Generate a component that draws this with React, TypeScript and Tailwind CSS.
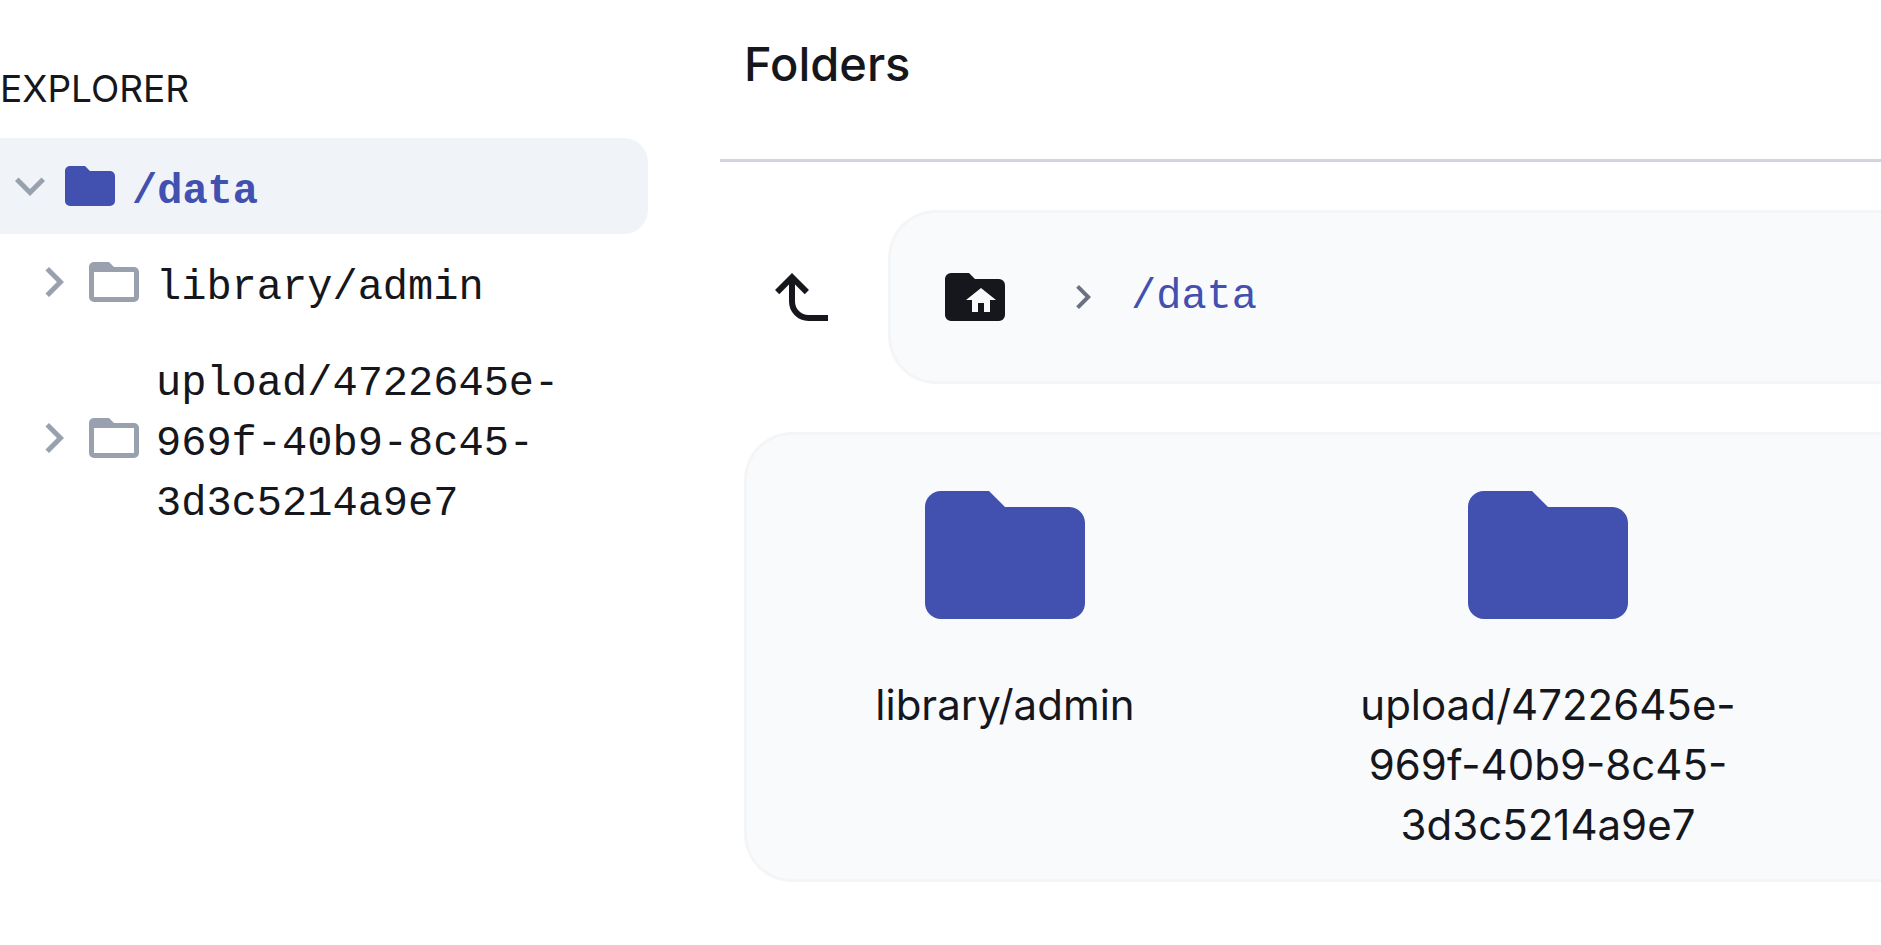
import { useState } from "react";

const paths = {
    folder: "M10,4H4C2.89,4 2,4.89 2,6V18A2,2 0 0,0 4,20H20A2,2 0 0,0 22,18V8C22,6.89 21.1,6 20,6H12L10,4Z",
    folderOutline: "M20,18H4V8H20M20,6H12L10,4H4C2.89,4 2,4.89 2,6V18A2,2 0 0,0 4,20H20A2,2 0 0,0 22,18V8C22,6.89 21.1,6 20,6Z",
    folderHome: "M20 6H12L10 4H4A2 2 0 0 0 2 6V18A2 2 0 0 0 4 20H20A2 2 0 0 0 22 18V8A2 2 0 0 0 20 6M17 13V17H15V14H13V17H11V13H9L14 9L19 13H17Z",
    chevronRight: "M8.59,16.58L13.17,12L8.59,7.41L10,6L16,12L10,18L8.59,16.58Z",
    chevronDown: "M7.41,8.58L12,13.17L16.59,8.58L18,10L12,16L6,10L7.41,8.58Z",
}

const folders = ['library/admin', 'upload/4722645e-969f-40b9-8c45-3d3c5214a9e7'];

function Icon({ path, className }: { path: string, className: string }) {
    return (
        <svg viewBox="0 0 24 24" fill="currentColor" aria-hidden="true" className={`shrink-0 ${className}`}>
            <path d={path} />
        </svg>
    )
}

function TreeItem({ name }: { name: string }) {
    return (
        <li className="flex items-center py-3 pl-6">
            <button aria-label={`Expand ${name}`} className="shrink-0 text-gray-400">
                <Icon path={paths.chevronRight} className="w-[60px] h-[60px]" />
            </button>
            <a href="#" className="flex items-center gap-3 min-w-0">
                <Icon path={paths.folderOutline} className="w-[60px] h-[60px] text-gray-400" />
                <span className="pt-3 font-['Liberation_Mono',monospace] text-[42px] leading-[60px]">{name}</span>
            </a>
        </li>
    )
}

function Explorer() {
    const [open, setOpen] = useState(true);

    return (
        <nav aria-label="Explorer" className="w-[648px] shrink-0 pt-16">
            <h2 className="text-[37px] leading-[50px] pb-6">EXPLORER</h2>
            <div className="flex items-center py-3 rounded-r-3xl bg-[#f0f4f9]">
                <button aria-label="Toggle /data" onClick={() => setOpen(!open)} className="text-gray-400">
                    <Icon path={open ? paths.chevronDown : paths.chevronRight} className="w-[60px] h-[60px]" />
                </button>
                <a href="#" className="flex items-center gap-3 text-[#4250af]">
                    <Icon path={paths.folder} className="w-[60px] h-[60px]" />
                    <span className="pt-3 font-['Liberation_Mono',monospace] font-bold text-[42px] leading-[60px]">/data</span>
                </a>
            </div>
            {open && <ul>
                {folders.map(name => <TreeItem key={name} name={name} />)}
            </ul>}
        </nav>
    )
}

function Breadcrumbs() {
    return (
        <div className="flex items-center gap-6">
            <button aria-label="Up to parent" className="p-6">
                <svg viewBox="0 0 24 24" fill="none" stroke="currentColor" strokeWidth="2" aria-hidden="true" className="w-[72px] h-[72px]">
                    <path d="M20 19H13.5A5.5 5.5 0 0 1 8 13.5V5.4" />
                    <path d="M3.05 10.35L8 5.4L12.95 10.35" />
                </svg>
            </button>
            <nav aria-label="Breadcrumbs" className="flex-1 flex items-center gap-6 p-6 rounded-l-[48px] border-[3px] border-r-0 border-[#f4f5f7] bg-[#f9fafc]">
                <button aria-label="Home" className="p-6">
                    <Icon path={paths.folderHome} className="w-[72px] h-[72px]" />
                </button>
                <Icon path={paths.chevronRight} className="w-12 h-12 text-gray-500" />
                <a href="#" className="font-['Liberation_Mono',monospace] text-[42px] leading-[60px] text-[#4250af]">/data</a>
            </nav>
        </div>
    )
}

function App() {
    return (
        <div className="flex gap-[72px] overflow-hidden bg-white text-[#15171c] font-[Inter,sans-serif]">
            <Explorer />
            <main className="flex-1 min-w-0">
                <header className="pl-6 pt-7 pb-[59px] border-b-[3px] border-[#d3d4de]">
                    <h1 className="text-[47px] leading-[72px] font-medium">Folders</h1>
                </header>
                <div className="flex flex-col gap-12 pl-6 pt-12">
                    <Breadcrumbs />
                    {/* Folder tiles */}
                    <div className="grid grid-cols-[repeat(auto-fill,516px)] gap-[27px] py-6 rounded-l-[48px] border-[3px] border-r-0 border-[#f4f5f7] bg-[#f9fafc]">
                        {folders.map(name => (
                            <a key={name} href="#" className="flex flex-col items-center gap-6 px-12">
                                <Icon path={paths.folder} className="w-48 h-48 text-[#4250af]" />
                                <span className="w-full text-center text-[42px] leading-[60px]">{name}</span>
                            </a>
                        ))}
                    </div>
                </div>
            </main>
        </div>
    )
}

export default App;
